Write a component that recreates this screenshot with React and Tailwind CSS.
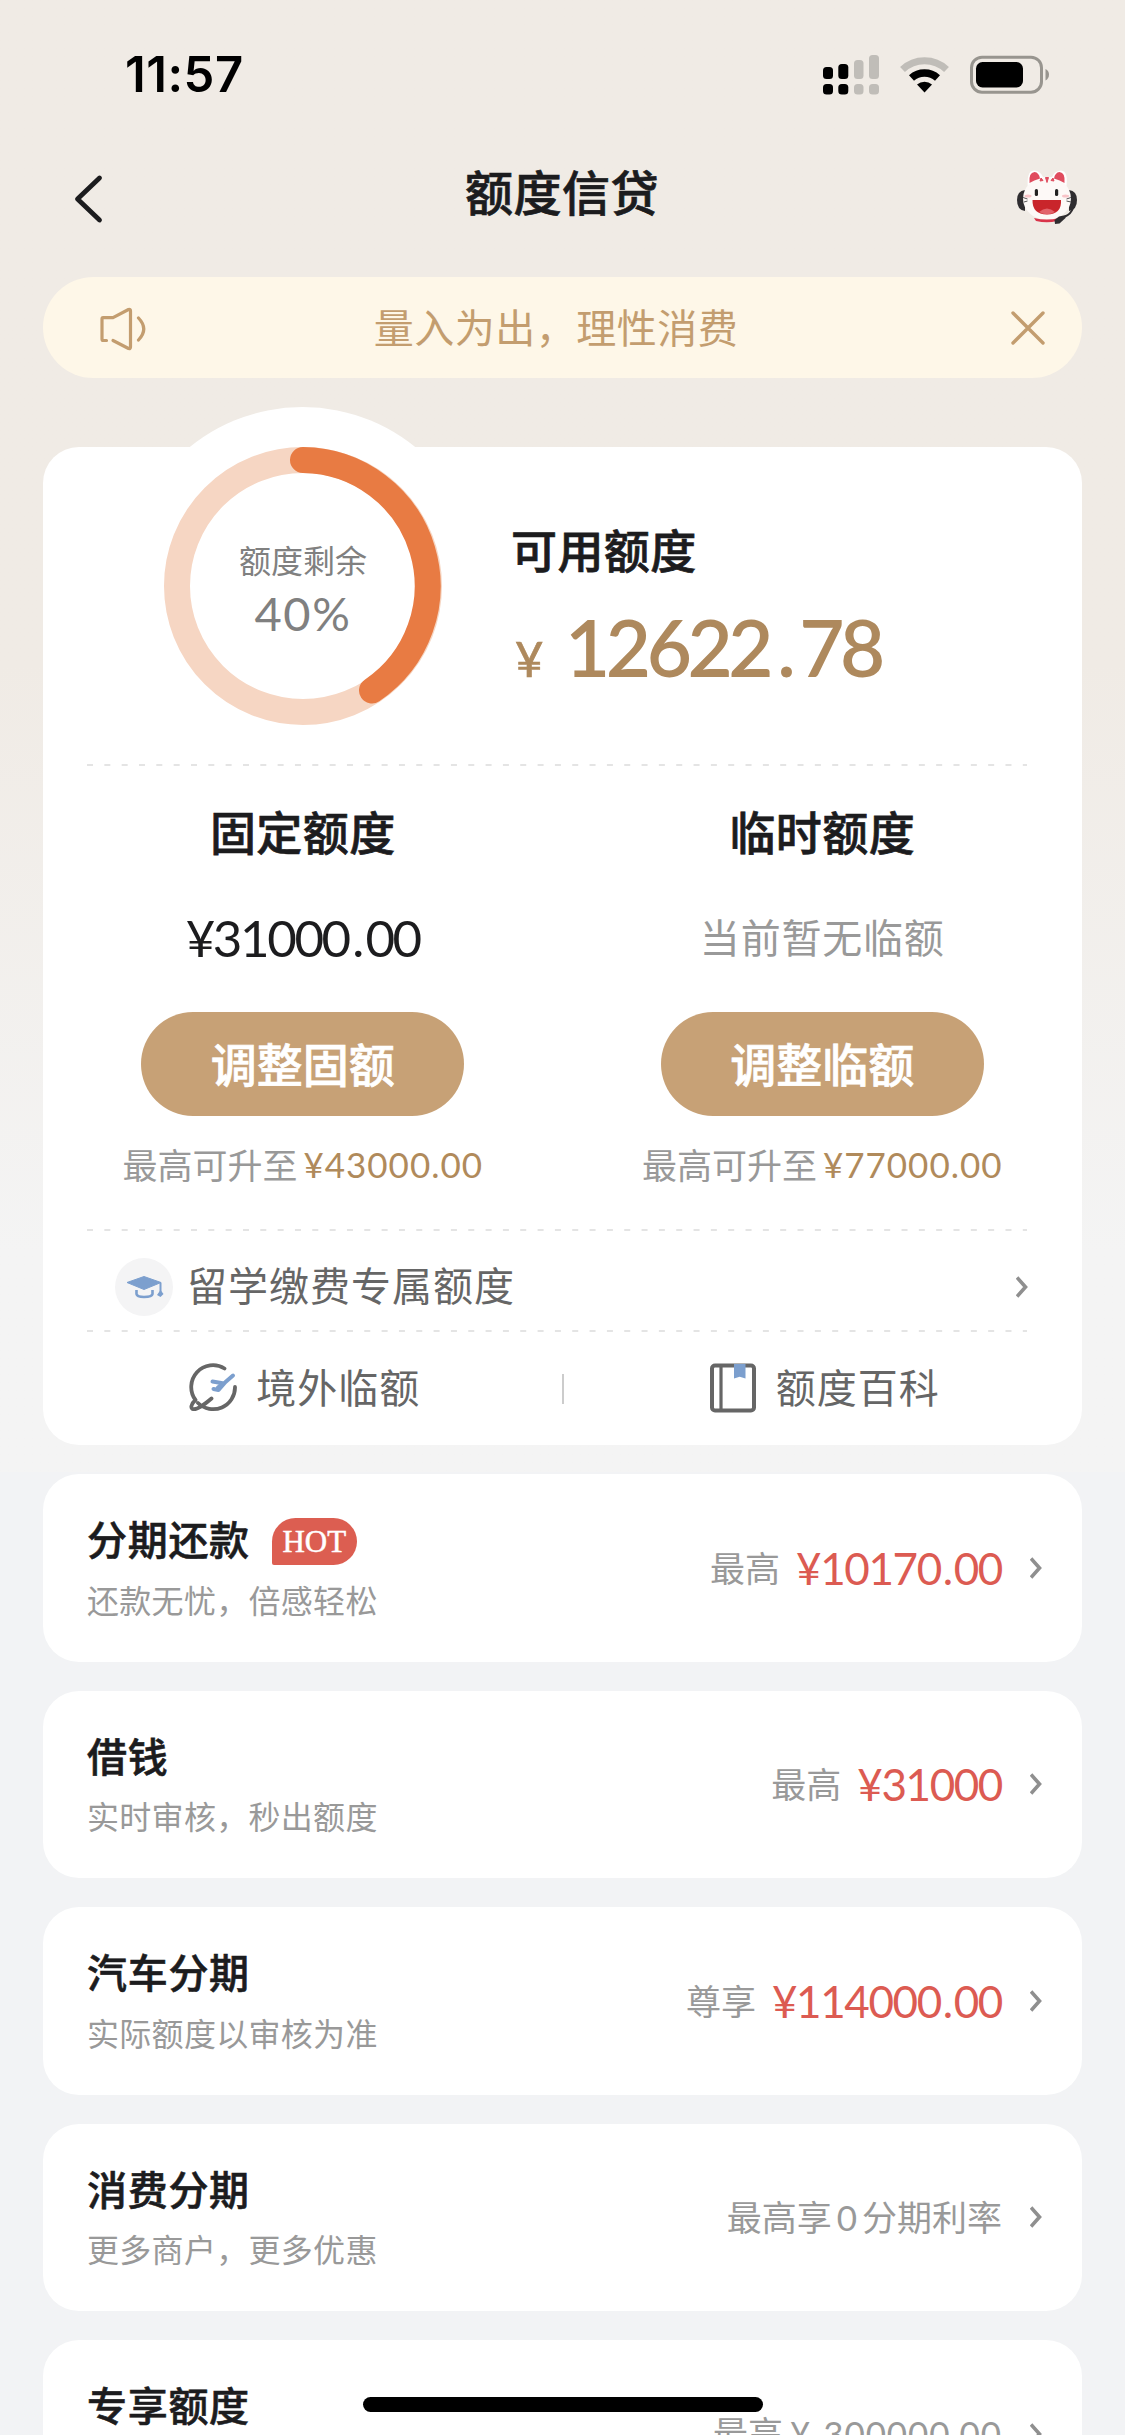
import React from 'react';

const PRODUCTS = [
  { title: '分期还款', desc: '还款无忧，倍感轻松', label: '最高', amount: '¥10170.00', hot: true },
  { title: '借钱', desc: '实时审核，秒出额度', label: '最高', amount: '¥31000' },
  { title: '汽车分期', desc: '实际额度以审核为准', label: '尊享', amount: '¥114000.00' },
  {
    title: '消费分期',
    desc: '更多商户，更多优惠',
    note: <>最高享<span className="mx-[5px] font-['Lato',sans-serif]">0</span>分期利率</>,
  },
  {
    title: '专享额度',
    note: <>最高<span className="ml-[7px] mr-[13px] font-['Lato',sans-serif]">¥</span><span className="tracking-[0.9px] font-['Lato',sans-serif]">300000.00</span></>,
  },
];

function Chevron() {
  return (
    <svg className="w-3 h-[22px] shrink-0" viewBox="0 0 12 22" fill="none" stroke="#8f8f8f" strokeWidth="3.6">
      <path d="M1 1.5 L9.5 11 L1 20.5" />
    </svg>
  );
}

function Divider() {
  return (
    <svg className="block w-[940px] h-0.5 ml-11" viewBox="0 0 940 2">
      <line x1="0" y1="1" x2="940" y2="1" stroke="#e4e4e4" strokeWidth="2" strokeDasharray="6 11.33" />
    </svg>
  );
}

// Price with a little air on both sides of the decimal point
function Amount({ value, dotClass }) {
  const [whole, cents] = value.split('.');
  return (
    <>
      {whole}
      {cents && <span className={dotClass}>.</span>}
      {cents}
    </>
  );
}

function StatusBar() {
  return (
    <div className="h-[147px] pl-[125px] pr-[76px] flex items-start justify-between">
      <div className="mt-[46px] text-[49px] leading-[58px] font-semibold tracking-[0.5px] text-black font-['Inter',sans-serif]">11:57</div>
      <svg className="mt-[52px] w-[228px] h-[48px]" viewBox="0 0 228 48">
        <g fill="#000">
          <rect x="2" y="15" width="10" height="12" rx="3.5" />
          <rect x="17.3" y="12" width="10" height="15" rx="3.5" />
          <rect x="2" y="32" width="10" height="10.5" rx="3.5" />
          <rect x="17.3" y="32" width="10" height="10.5" rx="3.5" />
        </g>
        <g fill="#c0bdb8">
          <rect x="33" y="8" width="9.5" height="19" rx="3.5" />
          <rect x="48" y="3" width="10" height="24" rx="3.5" />
          <rect x="33" y="32" width="9.5" height="10.5" rx="3.5" />
          <rect x="48" y="32" width="10" height="10.5" rx="3.5" />
        </g>
        <path d="M81.5 17.5 A32 32 0 0 1 125.5 17.5" fill="none" stroke="#c0bdb8" strokeWidth="7" />
        <path d="M90.5 26 A19.5 19.5 0 0 1 116.5 26" fill="none" stroke="#000" strokeWidth="7.5" />
        <path d="M103.5 40.5 L96 32.5 A11.5 11.5 0 0 1 111 32.5 Z" fill="#000" />
        <rect x="150.5" y="5.2" width="70" height="35" rx="10.5" fill="none" stroke="#98958f" strokeWidth="3" />
        <rect x="155" y="10" width="47" height="25.5" rx="6.5" fill="#000" />
        <path d="M224.5 17 Q228 18.5 228 22.5 Q228 26.5 224.5 28.5 Z" fill="#98958f" />
      </svg>
    </div>
  );
}

function Mascot() {
  return (
    <svg className="w-[62px] h-[56px]" viewBox="0 0 62 56">
      <path d="M9 21 Q1 22 1 31 Q1 41 9 42 Z" fill="#2f2d30" />
      <path d="M53 21 Q61 22 61 31 Q61 41 53 42 Z" fill="#2f2d30" />
      <path d="M12 20 Q10 2 18 1.5 Q24 1.5 27 8 H36 Q39 1.5 45 1.5 Q53 2 50 20 Z" fill="#fff" />
      <ellipse cx="31" cy="29.5" rx="24" ry="21.5" fill="#fdf9f7" />
      <path d="M13.5 14 Q12.5 3.5 18.5 3 Q23 3.5 24 9.5 Q18 11 13.5 14 Z" fill="#e04c5e" />
      <path d="M48.5 14 Q49.5 3.5 43.5 3 Q39 3.5 38 9.5 Q44 11 48.5 14 Z" fill="#e04c5e" />
      <path d="M29.5 8.5 H32.5 L31 13.5 Z M25 9 L27 11.5 L24 12 Z M37 9 L35 11.5 L38 12 Z" fill="#e04c5e" stroke="#e04c5e" strokeLinejoin="round" />
      <rect x="18.8" y="20" width="3.2" height="7" rx="1.5" fill="#222" />
      <rect x="39" y="20" width="3.2" height="7" rx="1.5" fill="#222" />
      <ellipse cx="12" cy="27" rx="3.5" ry="1.5" fill="#f8c4c8" />
      <ellipse cx="49.5" cy="27" rx="3.5" ry="1.5" fill="#f8c4c8" />
      <path d="M16.5 31 H45 Q46 45 31 45.5 Q16 45 16.5 31 Z" fill="#c9252b" />
      <path d="M23 43 Q31 36 39 43 Q31 47.5 23 43 Z" fill="#e2636b" />
      <path d="M7 28.5 L11.5 30 M8 33 L11.5 32 M55 28.5 L50.5 30 M55 33 L50.5 32" stroke="#555" strokeWidth="1" />
      <path d="M18 49 Q31 52 43 49 L41 52 Q31 54.5 20 52 Z" fill="#d9344a" />
      <path d="M57 39 Q55 45 49 47.5" fill="none" stroke="#2f2d30" strokeWidth="2" />
      <path d="M39 55 L38.5 51 L43 47.5 L50 46 L49.5 49 L43.5 54.5 Z" fill="#2f2d30" />
    </svg>
  );
}

function QuotaColumn({ title, value, button, raise, muted }) {
  return (
    <div className="flex-1 flex flex-col items-center">
      <h3 className="text-[46px] leading-[56px] font-medium tracking-[0.4px] text-[#1c1c1e] [-webkit-text-stroke:0.7px]">{title}</h3>
      {muted ? (
        <p className="mt-[50px] h-[55px] text-[40px] leading-[56px] tracking-[0.8px] text-[#999]">{value}</p>
      ) : (
        <p className="mt-[50px] h-[55px] text-[51px] leading-[60px] tracking-[-2.4px] text-[#1c1c1e] font-['Lato',sans-serif]">
          <Amount value={value} dotClass="mx-[3.5px]" />
        </p>
      )}
      <button className="mt-[49px] pb-1 w-[323px] h-[104px] rounded-full bg-[#c7a176] text-white text-[46px] font-medium [-webkit-text-stroke:0.7px]">{button}</button>
      <p className="mt-[23px] h-[50px] flex items-center text-[35px] leading-[50px] whitespace-nowrap text-[#999]">
        最高可升至
        <span className="ml-1.5 text-[35px] tracking-[1px] text-[#b08a5b] font-['Lato',sans-serif]">{raise}</span>
      </p>
    </div>
  );
}

function QuotaCard() {
  return (
    <section className="relative mt-[69px] h-[998px] rounded-[36px] bg-white">
      {/* white bump behind the ring */}
      <div className="absolute left-[81px] -top-10 size-[357px] rounded-full bg-white" />
      <div className="relative h-[317px] flex">
        <div className="relative ml-[121px] size-[278px] shrink-0">
          <svg className="size-full" viewBox="0 0 278 278" fill="none">
            <circle cx="139" cy="139" r="126" stroke="#f6d6c3" strokeWidth="26" />
            <path d="M139 13 A126 126 0 0 1 208 243.5" stroke="#e87b43" strokeWidth="26" strokeLinecap="round" />
          </svg>
          <div className="absolute inset-0 flex flex-col items-center text-[#808080]">
            <span className="mt-[89px] text-[32px] leading-[46px]">额度剩余</span>
            <span className="mt-[5px] text-[47px] leading-[52px] tracking-[1.6px] font-['Lato',sans-serif]">40%</span>
          </div>
        </div>
        <div className="ml-[69px]">
          <h2 className="mt-[73px] text-[46px] leading-[56px] font-medium tracking-[0.4px] text-[#1c1c1e] [-webkit-text-stroke:0.7px]">可用额度</h2>
          <p className="mt-[31px] flex items-baseline text-[#ae895d] font-['Lato',sans-serif]">
            <span className="w-[54px] pl-1 text-[49px] leading-[80px] [-webkit-text-stroke:0.7px]">¥</span>
            <span className="text-[78px] leading-[80px] font-semibold tracking-[-4.4px]">
              <Amount value="12622.78" dotClass="mx-[8px]" />
            </span>
          </p>
        </div>
      </div>
      <Divider />
      <div className="flex h-[463px] pt-[36px]">
        <QuotaColumn title="固定额度" value="¥31000.00" button="调整固额" raise="¥43000.00" />
        <QuotaColumn title="临时额度" value="当前暂无临额" button="调整临额" raise="¥77000.00" muted />
      </div>
      <Divider />
      <div className="h-[99px] pl-[72px] pr-[54px] pt-3 flex items-center justify-between text-[#666]">
        <div className="flex items-center">
          <svg className="size-[58px] mr-3.5" viewBox="0 0 58 58">
            <circle cx="29" cy="29" r="29" fill="#f4f4f5" />
            <path d="M12 24.5 L29 18.5 L46 24.5 L29 31.5 Z" fill="#7c9fce" stroke="#7c9fce" strokeLinejoin="round" />
            <path d="M21.5 32 V36 Q22 39 29 39 Q37 39 37.5 36 V32" fill="none" stroke="#7c9fce" strokeWidth="2.6" />
            <path d="M45.5 24.5 V34" stroke="#7c9fce" strokeWidth="2" />
            <path d="M45.5 32 L48.5 36 L45.5 39 L42 37 Z" fill="#7c9fce" />
          </svg>
          <span className="-mt-[5px] text-[40px] leading-[56px] tracking-[1px]">留学缴费专属额度</span>
        </div>
        <Chevron />
      </div>
      <Divider />
      <div className="h-[113px] flex items-center text-[40px] leading-[56px] tracking-[1px] text-[#666]">
        <div className="flex-1 flex items-center justify-center">
          <svg className="-mt-0.5 size-[50px] ml-1 mr-[18px]" viewBox="0 0 50 50" fill="none" strokeLinecap="round" strokeLinejoin="round">
            <path d="M36.5 5.5 A21.8 21.8 0 0 0 7.5 37 C3 41 2.5 45 4.5 46 C9 47.5 17 41 23.5 35.5 M10 40 A21.8 21.8 0 0 0 47 24" stroke="#666" strokeWidth="3.8" />
            <path d="M45 12.5 L37.5 19 L30.5 27 L25.5 26 M24.5 18.5 L36 20.5 L30 24.5" stroke="#7c9fce" strokeWidth="4" />
          </svg>
          <span className="-mt-[5px]">境外临额</span>
        </div>
        <div className="w-0.5 h-[30px] bg-[#ccc]" />
        <div className="flex-1 flex items-center justify-center">
          <svg className="-mt-0.5 size-[50px] ml-0.5 mr-[18px]" viewBox="0 0 50 50" fill="none">
            <rect x="4" y="2.5" width="42" height="45" rx="3" stroke="#666" strokeWidth="4" />
            <path d="M13 3 V47" stroke="#666" strokeWidth="3.2" />
            <path d="M26 1 H37.5 V15.5 L31.7 13.8 L26 15.5 Z" fill="#7c9fce" />
          </svg>
          <span className="-mt-[5px]">额度百科</span>
        </div>
      </div>
    </section>
  );
}

function ProductCard({ title, desc, label, amount, note, hot }) {
  return (
    <section className="h-[187.5px] shrink-0 rounded-[36px] bg-white pl-[44px] pr-[40px] flex items-center justify-between">
      <div>
        <div className="flex items-center h-[56px]">
          <h3 className="-mt-[9px] text-[40px] leading-[56px] font-medium tracking-[0.7px] text-[#1c1c1e] [-webkit-text-stroke:0.6px]">{title}</h3>
          {hot && (
            <span className="-mt-0.5 ml-[22px] w-[85px] h-[47px] rounded-[24px] rounded-bl-[2px] bg-[#dc5e51] text-white text-center text-[31px] leading-[47px] font-['Liberation_Serif',serif] [-webkit-text-stroke:0.5px]">HOT</span>
          )}
        </div>
        <p className="mt-1 h-[46px] text-[32px] leading-[48px] tracking-[0.3px] text-[#999]">{desc}</p>
      </div>
      <div className="flex items-center text-[35px] text-[#999]">
        {label && <span className="-mt-0.5">{label}</span>}
        {amount && (
          <span className="ml-4 text-[44px] tracking-[-1.4px] text-[#dc5b52] font-['Lato',sans-serif]">
            <Amount value={amount} dotClass="mx-[2px]" />
          </span>
        )}
        {note && <span className="-mt-0.5">{note}</span>}
        <div className="ml-[28px] flex"><Chevron /></div>
      </div>
    </section>
  );
}

export default function App() {
  return (
    <div className="relative w-[1125px] h-[2435px] overflow-hidden bg-[#f2f3f5] font-['Noto_Sans_CJK_SC',sans-serif]">
      <div className="absolute inset-x-0 top-0 h-[1472px] bg-linear-to-b from-[#f0ebe5] from-45% to-[#f4f4f4] to-85%" />
      <div className="relative">
        <StatusBar />
        <header className="h-[130px] pl-[74px] pr-[47px] flex items-start justify-between">
          <svg className="mt-[27px] w-[30px] h-[50px]" viewBox="0 0 30 50" fill="none" stroke="#1c1c1e" strokeWidth="4.8" strokeLinecap="round" strokeLinejoin="round">
            <path d="M25.5 4 L3.5 25 L25.5 46" />
          </svg>
          <h1 className="mt-[13px] ml-[4px] text-[48px] leading-[60px] font-medium tracking-[0.5px] text-[#1c1c1e] [-webkit-text-stroke:0.7px]">额度信贷</h1>
          <div className="mt-[22px]"><Mascot /></div>
        </header>
        <main className="px-[43px]">
          <div className="h-[101px] rounded-full bg-[#fef7e8] pl-[54px] pr-[37px] flex items-center justify-between text-[#c39d6f]">
            <svg className="w-[50px] h-[46px]" viewBox="0 0 50 46" fill="none" stroke="currentColor" strokeWidth="3.2" strokeLinecap="round" strokeLinejoin="round">
              <path d="M9.5 35.5 H6 Q5 35.5 5 34 V14 Q5 12.7 6 12.7 H16 L31.5 4.5 Q33.5 4 33.5 6 V42 Q33.5 44 31.5 43.5 L16 35.5" />
              <path d="M41.5 13 Q52 24 41.5 35" />
            </svg>
            <span className="-mt-[3px] mr-[46px] text-[40px] leading-[56px] tracking-[0.5px]">量入为出，理性消费</span>
            <svg className="w-[34px] h-[34px]" viewBox="0 0 34 34" stroke="currentColor" strokeWidth="3.4" strokeLinecap="round">
              <path d="M2 2 L32 32 M32 2 L2 32" />
            </svg>
          </div>
          <QuotaCard />
          <div className="mt-[29px] flex flex-col gap-[29px]">
            {PRODUCTS.map((item) => (
              <ProductCard key={item.title} {...item} />
            ))}
          </div>
        </main>
      </div>
      <div className="absolute left-[363px] top-[2397px] w-[400px] h-[15px] rounded-full bg-black" />
    </div>
  );
}
